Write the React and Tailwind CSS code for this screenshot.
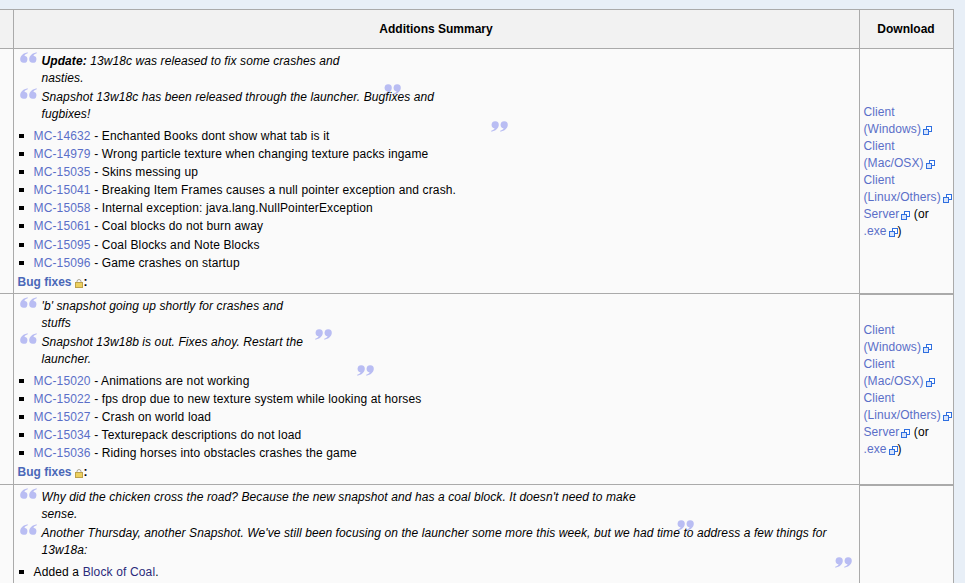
import React from 'react';

const QuoteMark = ({ className }) => (
  <svg className={`absolute ${className}`} width="17" height="11" viewBox="0 0 17 11" fill="#b9bdf3">
    <path d="M7.6 0.2 C3.6 1 0.2 3.6 0.2 7.2 A3.6 3.6 0 1 0 4.4 3.7 C4.8 2.6 6 1.6 7.8 1.2 Z" />
    <path transform="translate(9 0)" d="M7.6 0.2 C3.6 1 0.2 3.6 0.2 7.2 A3.6 3.6 0 1 0 4.4 3.7 C4.8 2.6 6 1.6 7.8 1.2 Z" />
  </svg>
);

function Quote({ children, closeClass }) {
  return (
    <div className="relative ml-[24px] mb-[2px] italic leading-[17px]">
      <QuoteMark className="left-[-22px] top-[-1px]" />
      {children}
      <QuoteMark className={`rotate-180 ${closeClass}`} />
    </div>
  );
}

const ExtIcon = () => (
  <svg className="inline-block ml-[2px] mb-[-1px]" width="9" height="9" viewBox="0 0 9 9" fill="none">
    <rect x="3.5" y="0.5" width="5" height="5" fill="#ffffff" stroke="#2f6fe0" />
    <rect x="0.5" y="3.5" width="5" height="5" fill="#d8e4fb" stroke="#2f6fe0" />
  </svg>
);

const LockIcon = () => (
  <svg className="inline-block ml-[3px] mr-[1px] mb-[-1px]" width="8" height="9" viewBox="0 0 8 9">
    <path d="M2 4 V2.5 A2 2 0 0 1 6 2.5 V4" fill="none" stroke="#a8a595" />
    <rect x="0.5" y="3.5" width="7" height="5" fill="#ecd060" stroke="#bda24c" />
  </svg>
);

const Link = ({ children }) => <a className="text-[#5a6fc8]">{children}</a>;

function Bullet() {
  return <span className="absolute left-[-11px] top-[7px] w-[5px] h-[4px] bg-black" />;
}

function Fixes({ items, className = '' }) {
  return (
    <ul className={`ml-[12px] mt-[4px] list-none tracking-[0.14px] ${className}`}>
      {items.map(([id, text]) => (
        <li key={id} className="relative pl-[4px] h-[18px] leading-[18px]">
          <Bullet />
          <Link>{id}</Link> - {text}
        </li>
      ))}
    </ul>
  );
}

const BugFixes = () => (
  <div className="mt-[1px] leading-[18px] font-bold tracking-normal">
    <a className="text-[#4a68b8]">Bug fixes</a>
    <LockIcon />:
  </div>
);

function Downloads() {
  return (
    <td className="border border-b-2 border-[#aaaaaa] pl-[4px] pt-[2px] align-middle leading-[17px] whitespace-nowrap text-[#5a6fc8]">
      <div>Client<br />(Windows)<ExtIcon /></div>
      <div>Client<br />(Mac/OSX)<ExtIcon /></div>
      <div>Client<br />(Linux/Others)<ExtIcon /></div>
      <div>Server<ExtIcon /> <span className="text-black">(or</span><br />.exe<ExtIcon /><span className="text-black">)</span></div>
    </td>
  );
}

export default function App() {
  return (
    <div className="h-screen overflow-hidden bg-[#e8eff7] pt-[9px] font-['Liberation_Sans',Arial,sans-serif] text-[12px] tracking-[0.09px] text-black">
      <table className="w-[953px] table-fixed border-collapse bg-[#fafafa]">
        <colgroup>
          <col className="w-[13px]" />
          <col className="w-[846px]" />
          <col className="w-[94px]" />
        </colgroup>
        <thead>
          <tr className="h-[39px] bg-[#f2f2f2] font-bold tracking-normal">
            <th className="border-y border-[#aaaaaa]" />
            <th className="border border-[#aaaaaa]">Additions Summary</th>
            <th className="border border-[#aaaaaa]">Download</th>
          </tr>
        </thead>
        <tbody>
          <tr className="h-[245px]">
            <td className="border-y border-[#aaaaaa]" />
            <td className="border border-[#aaaaaa] px-[4px] align-top pt-[4px]">
              <Quote closeClass="left-[342px] top-[31px]"><b>Update:</b> 13w18c was released to fix some crashes and<br />nasties.</Quote>
              <Quote closeClass="left-[449px] top-[32px]">Snapshot 13w18c has been released through the launcher. Bugfixes and<br />fugbixes!</Quote>
              <Fixes className="[&>li:nth-child(7)]:mt-[1px]" items={[
                ['MC-14632', 'Enchanted Books dont show what tab is it'],
                ['MC-14979', 'Wrong particle texture when changing texture packs ingame'],
                ['MC-15035', 'Skins messing up'],
                ['MC-15041', 'Breaking Item Frames causes a null pointer exception and crash.'],
                ['MC-15058', 'Internal exception: java.lang.NullPointerException'],
                ['MC-15061', 'Coal blocks do not burn away'],
                ['MC-15095', 'Coal Blocks and Note Blocks'],
                ['MC-15096', 'Game crashes on startup'],
              ]} />
              <BugFixes />
            </td>
            <Downloads />
          </tr>
          <tr className="h-[191px]">
            <td className="border-y border-[#aaaaaa]" />
            <td className="border border-[#aaaaaa] px-[4px] align-top pt-[4px]">
              <Quote closeClass="left-[273px] top-[31px]">'b' snapshot going up shortly for crashes and<br />stuffs</Quote>
              <Quote closeClass="left-[315px] top-[31px]">Snapshot 13w18b is out. Fixes ahoy. Restart the<br />launcher.</Quote>
              <Fixes items={[
                ['MC-15020', 'Animations are not working'],
                ['MC-15022', 'fps drop due to new texture system while looking at horses'],
                ['MC-15027', 'Crash on world load'],
                ['MC-15034', 'Texturepack descriptions do not load'],
                ['MC-15036', 'Riding horses into obstacles crashes the game'],
              ]} />
              <BugFixes />
            </td>
            <Downloads />
          </tr>
          <tr className="h-[120px]">
            <td className="border-y border-[#aaaaaa]" />
            <td className="border border-[#aaaaaa] px-[4px] align-top pt-[4px]">
              <Quote closeClass="left-[635px] top-[31px]">Why did the chicken cross the road? Because the new snapshot and has a coal block. It doesn't need to make<br />sense.</Quote>
              <Quote closeClass="left-[793px] top-[32px]">Another Thursday, another Snapshot. We've still been focusing on the launcher some more this week, but we had time to address a few things for<br />13w18a:</Quote>
              <ul className="ml-[12px] mt-[4px] list-none tracking-[0.14px]">
                <li className="relative pl-[4px] h-[18px] leading-[18px]">
                  <Bullet />
                  Added a <span className="text-[#2a2a7a]">Block of Coal</span>.
                </li>
              </ul>
            </td>
            <td className="border border-[#aaaaaa]" />
          </tr>
        </tbody>
      </table>
    </div>
  );
}
